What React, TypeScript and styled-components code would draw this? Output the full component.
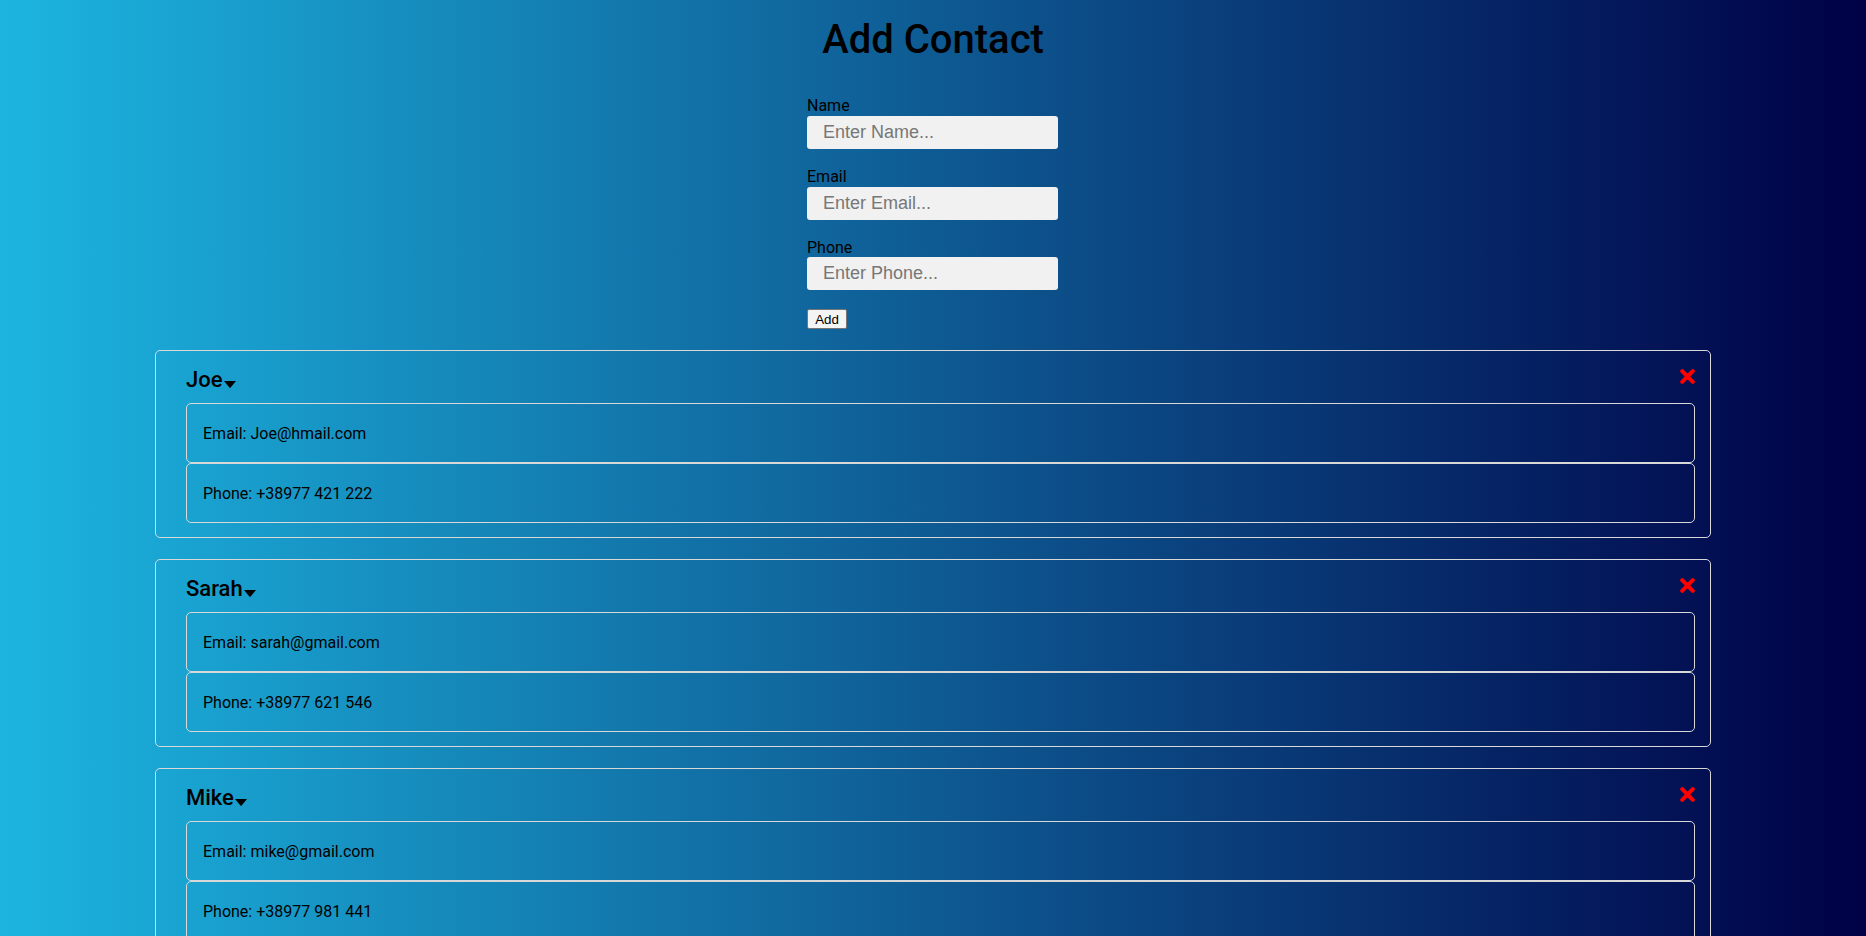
import React from "react";
import styled, { createGlobalStyle } from "styled-components";

const GlobalStyle = createGlobalStyle`
  * { box-sizing: border-box; }
  html, body { margin: 0; padding: 0; }
  body {
    font-family: Roboto, "Liberation Sans", Arial, sans-serif;
    color: #000;
    background: linear-gradient(to right, #1cb5e0, #000046);
    min-height: 100vh;
  }
`;

const Page = styled.div`
  display: flex;
  flex-direction: column;
  align-items: center;
  padding-top: 16px;
  padding-bottom: 40px;
`;

const Title = styled.h1`
  margin: 0 0 33px;
  font-size: 40px;
  font-weight: 500;
  line-height: 48px;
`;

const Form = styled.form`
  width: 252px;
  display: flex;
  flex-direction: column;
  align-items: flex-start;
  gap: 19px;
`;

const Field = styled.div`
  display: flex;
  flex-direction: column;
  width: 251px;
`;

const Label = styled.label`
  display: block;
  font-size: 16px;
  line-height: 18.75px;
`;

const Input = styled.input`
  width: 100%;
  height: 33px;
  border: none;
  border-radius: 3px;
  background: #f1f1f1;
  padding: 0 16px;
  font-family: "Liberation Sans", Arial, sans-serif;
  font-size: 18px;
  color: #333;
  outline: none;
  &::placeholder { color: #777; }
`;

const AddButton = styled.button`
  font-family: "Liberation Sans", Arial, sans-serif;
  font-size: 13.333px;
  line-height: 15px;
  padding: 1px 6px;
  background: #f4f4f4;
  border: 1px solid #767676;
  border-radius: 2px;
  height: 20px;
  width: 40px;
  display: flex;
  align-items: center;
  justify-content: center;
  color: #000;
`;

const List = styled.div`
  width: 1556px;
  margin-top: 21px;
  display: flex;
  flex-direction: column;
  gap: 21px;
`;

const Card = styled.div`
  border: 1px solid #d8d8d8;
  border-radius: 5px;
  padding: 15px 15px 14px 30px;
`;

const CardHeader = styled.div`
  height: 26px;
  display: flex;
  justify-content: space-between;
  align-items: flex-start;
  margin-bottom: 11px;
`;

const Name = styled.h3`
  margin: 0;
  padding-top: 1px;
  font-size: 22px;
  font-weight: 500;
  line-height: 26px;
  display: flex;
  align-items: baseline;
`;

const Caret = styled.svg`
  width: 12px;
  height: 7px;
  margin-left: 1px;
  align-self: baseline;
  position: relative;
  top: 1px;
`;

const CloseIcon = styled.svg`
  width: 15px;
  height: 15px;
  margin-top: 3px;
  cursor: pointer;
`;

const Detail = styled.div`
  height: 60px;
  border: 1px solid #d8d8d8;
  border-radius: 5px;
  padding: 0 16px;
  display: flex;
  align-items: center;
  font-size: 16px;
`;

const contacts = [
  { name: "Joe", email: "Joe@hmail.com", phone: "+38977 421 222" },
  { name: "Sarah", email: "sarah@gmail.com", phone: "+38977 621 546" },
  { name: "Mike", email: "mike@gmail.com", phone: "+38977 981 441" },
];

export default function App() {
  return (
    <>
      <GlobalStyle />
      <Page>
        <Title>Add Contact</Title>
        <Form onSubmit={(e) => e.preventDefault()}>
          <Field>
            <Label>Name</Label>
            <Input placeholder="Enter Name..." />
          </Field>
          <Field>
            <Label>Email</Label>
            <Input placeholder="Enter Email..." />
          </Field>
          <Field>
            <Label>Phone</Label>
            <Input placeholder="Enter Phone..." />
          </Field>
          <AddButton type="submit">Add</AddButton>
        </Form>
        <List>
          {contacts.map((c) => (
            <Card key={c.name}>
              <CardHeader>
                <Name>
                  {c.name}
                  <Caret viewBox="0 0 12 7">
                    <path d="M0 0 H12 L6.6 6.4 Q6 7 5.4 6.4 Z" fill="#000" />
                  </Caret>
                </Name>
                <CloseIcon viewBox="0 0 15 15">
                  <path
                    d="M2.2 2.2 L12.8 12.8 M12.8 2.2 L2.2 12.8"
                    stroke="#ff0000"
                    strokeWidth="4"
                    strokeLinecap="round"
                    fill="none"
                  />
                </CloseIcon>
              </CardHeader>
              <Detail>Email: {c.email}</Detail>
              <Detail>Phone: {c.phone}</Detail>
            </Card>
          ))}
        </List>
      </Page>
    </>
  );
}
